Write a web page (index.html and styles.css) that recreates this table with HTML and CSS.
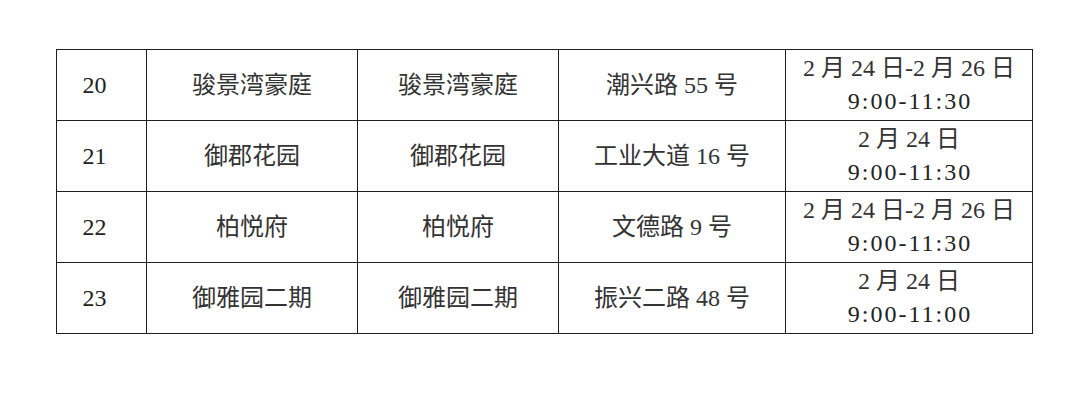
FILE: index.html
```html
<!DOCTYPE html>
<html lang="zh-CN">
<head>
<meta charset="utf-8">
<link rel="stylesheet" href="styles.css">
</head>
<body>
<table class="sched">
  <colgroup>
    <col class="c-no"><col class="c-name"><col class="c-name2"><col class="c-addr"><col class="c-time">
  </colgroup>
  <tbody>
    <tr>
      <td class="no">20</td>
      <td>骏景湾豪庭</td>
      <td>骏景湾豪庭</td>
      <td>潮兴路 55 号</td>
      <td>2 月 24 日-2 月 26 日<br><span class="time">9:00-11:30</span></td>
    </tr>
    <tr>
      <td class="no">21</td>
      <td>御郡花园</td>
      <td>御郡花园</td>
      <td>工业大道 16 号</td>
      <td>2 月 24 日<br><span class="time">9:00-11:30</span></td>
    </tr>
    <tr>
      <td class="no">22</td>
      <td>柏悦府</td>
      <td>柏悦府</td>
      <td>文德路 9 号</td>
      <td>2 月 24 日-2 月 26 日<br><span class="time">9:00-11:30</span></td>
    </tr>
    <tr>
      <td class="no">23</td>
      <td>御雅园二期</td>
      <td>御雅园二期</td>
      <td>振兴二路 48 号</td>
      <td>2 月 24 日<br><span class="time">9:00-11:00</span></td>
    </tr>
  </tbody>
</table>
</body>
</html>
```
FILE: styles.css
```css
html, body {
  margin: 0;
  padding: 0;
  background: #ffffff;
}
body {
  padding: 49px 0 0 56px;
  font-family: "Liberation Serif", "Noto Sans CJK SC", serif;
  color: #333333;
}
.sched {
  border-collapse: collapse;
  table-layout: fixed;
  width: 976px;
}
.c-no { width: 90px; }
.c-name { width: 211px; }
.c-name2 { width: 201px; }
.c-addr { width: 227px; }
.c-time { width: 247px; }
.sched td {
  border: 1px solid #1e1e1e;
  height: 70px;
  padding: 0;
  text-align: center;
  vertical-align: middle;
  font-size: 24px;
  line-height: 33px;
  font-weight: 400;
}
.sched td.no {
  padding-right: 14px;
  color: #222222;
}
.time {
  letter-spacing: 2px;
  margin-right: -2px;
  color: #222222;
}
```
